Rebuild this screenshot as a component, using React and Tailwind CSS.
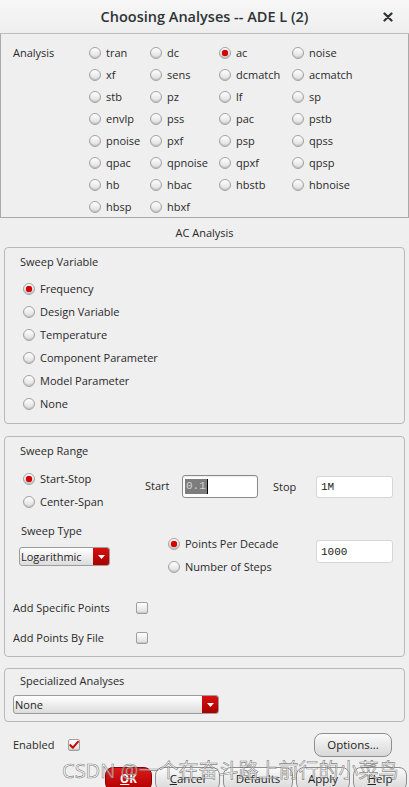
import React from "react";

const Radio = ({ checked }) => (
  <span className="relative inline-flex h-[12px] w-[12px] shrink-0 items-center justify-center rounded-full border border-[#a3a3a3] bg-[linear-gradient(#ffffff,#dcdcdc)] shadow-[inset_0_-1px_1px_rgba(0,0,0,0.15)]">
    {checked && <span className="h-[6px] w-[6px] rounded-full bg-[#d40000] shadow-[0_0_1px_#900]" />}
  </span>
);

const RadioItem = ({ label, checked, className = "" }) => (
  <div className={"flex items-center gap-[5px] " + className}>
    <Radio checked={checked} />
    <span className="whitespace-nowrap">{label}</span>
  </div>
);

const Checkbox = ({ checked }) => (
  <span className="inline-flex h-[12px] w-[12px] shrink-0 items-center justify-center rounded-[2px] border border-[#a0a0a0] bg-[linear-gradient(#ffffff,#dedede)] shadow-[inset_0_-1px_1px_rgba(0,0,0,0.12)]">
    {checked && (
      <svg width="11" height="10" viewBox="0 0 11 10">
        <path d="M1.5 5.2 L4.3 8 L9.8 1.5" fill="none" stroke="#cc0000" strokeWidth="2.2" strokeLinecap="round" strokeLinejoin="round" />
      </svg>
    )}
  </span>
);

const Dropdown = ({ value, className = "" }) => (
  <div className={"flex overflow-hidden rounded-[3px] border border-[#9c9c9c] bg-[linear-gradient(#ffffff,#dcdcdc)] " + className}>
    <span className="flex flex-1 items-center pl-[1px] text-[#1e1e1e]">{value}</span>
    <span className="flex w-[16px] items-center justify-center bg-[linear-gradient(#d81010,#a80000)]">
      <svg width="7" height="4" viewBox="0 0 7 4">
        <path d="M0 0 H7 L3.5 4 Z" fill="#ffffff" />
      </svg>
    </span>
  </div>
);

const Group = ({ children, className = "" }) => (
  <div className={"mx-[4px] rounded-[4px] border border-[#b9b9b9] " + className}>{children}</div>
);

const analyses = [
  ["tran", "dc", "ac", "noise"],
  ["xf", "sens", "dcmatch", "acmatch"],
  ["stb", "pz", "lf", "sp"],
  ["envlp", "pss", "pac", "pstb"],
  ["pnoise", "pxf", "psp", "qpss"],
  ["qpac", "qpnoise", "qpxf", "qpsp"],
  ["hb", "hbac", "hbstb", "hbnoise"],
  ["hbsp", "hbxf"],
];

const Btn = ({ children, className = "" }) => (
  <div className={"flex h-[24px] items-center justify-center rounded-[8px] border border-[#8f8f8f] bg-[linear-gradient(#fafafa,#d8d8d8)] text-[#222] " + className}>
    {children}
  </div>
);

export default function App() {
  return (
    <div className="relative h-[787px] w-[409px] overflow-hidden bg-[#efefef] font-['Open_Sans','Noto_Sans',sans-serif] text-[11px] leading-[16px] text-[#2a2a2a]">
      {/* Title bar */}
      <div className="grid h-[34px] grid-cols-[40px_1fr_40px] items-center border-b border-[#bdbdbd] bg-[linear-gradient(#f7f7f7,#eeeeee)]">
        <span />
        <span className="text-center text-[14.5px] font-semibold text-[#2e3436]">Choosing Analyses -- ADE L (2)</span>
        <span className="flex justify-center pr-[2px]">
          <svg width="10" height="10" viewBox="0 0 10 10">
            <path d="M1.5 1.5 L8.5 8.5 M8.5 1.5 L1.5 8.5" stroke="#2e3436" strokeWidth="2.2" strokeLinecap="round" />
          </svg>
        </span>
      </div>

      {/* Analysis */}
      <div className="flex h-[184px] border-x border-b border-[#a9a9a9] pt-[8px]">
        <div className="w-[88px] pl-[12px] leading-[22px]">Analysis</div>
        <div className="grid grid-cols-[61px_69px_73px_auto] auto-rows-[22px]">
          {analyses.flatMap((row, r) =>
            [0, 1, 2, 3].map((c) =>
              row[c] ? (
                <RadioItem key={r + "-" + c} label={row[c]} checked={row[c] === "ac"} />
              ) : (
                <span key={r + "-" + c} />
              )
            )
          )}
        </div>
      </div>

      {/* AC Analysis header */}
      <div className="flex h-[29px] items-center justify-center">AC Analysis</div>

      {/* Sweep Variable */}
      <Group className="h-[177px] pl-[15px] pt-[6px]">
        <div>Sweep Variable</div>
        <div className="ml-[3px] mt-[7px] flex flex-col">
          {["Frequency", "Design Variable", "Temperature", "Component Parameter", "Model Parameter", "None"].map((l, i) => (
            <RadioItem key={l} label={l} checked={i === 0} className="h-[23px]" />
          ))}
        </div>
      </Group>

      {/* Sweep Range */}
      <Group className="mt-[12px] h-[221px] pt-[6px]">
        <div className="pl-[15px]">Sweep Range</div>
        <div className="mt-[8px] flex items-start">
          <div className="ml-[18px] flex w-[122px] flex-col">
            <RadioItem label="Start-Stop" checked className="h-[23px]" />
            <RadioItem label="Center-Span" className="h-[23px]" />
          </div>
          <div className="mt-[7px] flex items-center">
            <span className="w-[37px]">Start</span>
            <div className="flex h-[23px] w-[76px] items-center rounded-[3px] border border-[#8a8a8a] bg-white pl-[2px] font-['Liberation_Mono',monospace] text-[11px] shadow-[inset_0_1px_1px_rgba(0,0,0,0.08)]">
              <span className="bg-[#7d7d7d] px-[1px] leading-[15px] text-[#d4d4d4]">0.1</span>
              <span className="h-[15px] w-[1px] bg-black" />
            </div>
            <span className="ml-[15px] mt-[2px] w-[43px]">Stop</span>
            <div className="mt-[2px] flex h-[22px] w-[77px] items-center rounded-[3px] border border-[#d6d6d6] bg-white pl-[4px] font-['Liberation_Mono',monospace] text-[11px] text-[#222]">
              1M
            </div>
          </div>
        </div>
        <div className="mt-[10px] flex items-start">
          <div className="w-[163px] pl-[14px]">
            <div className="pl-[2px]">Sweep Type</div>
            <Dropdown value="Logarithmic" className="mt-[8px] h-[19px] w-[91px]" />
          </div>
          <div className="mt-[9px] flex w-[148px] flex-col">
            <RadioItem label="Points Per Decade" checked className="h-[23px]" />
            <RadioItem label="Number of Steps" className="h-[23px]" />
          </div>
          <div className="mt-[17px] flex h-[23px] w-[77px] items-center rounded-[3px] border border-[#d6d6d6] bg-white pl-[4px] font-['Liberation_Mono',monospace] text-[11px] text-[#222]">
            1000
          </div>
        </div>
        <div className="mt-[15px] flex h-[30px] items-center pl-[8px]">
          <span className="w-[123px]">Add Specific Points</span>
          <Checkbox />
        </div>
        <div className="flex h-[30px] items-center pl-[8px]">
          <span className="w-[123px]">Add Points By File</span>
          <Checkbox />
        </div>
      </Group>

      {/* Specialized Analyses */}
      <Group className="mt-[11px] h-[54px] pt-[4px]">
        <div className="pl-[15px]">Specialized Analyses</div>
        <Dropdown value="None" className="ml-[8px] mt-[6px] h-[19px] w-[206px]" />
      </Group>

      {/* Enabled / Options */}
      <div className="mt-[12px] flex h-[22px] items-center pl-[13px] pr-[17px]">
        <span className="w-[55px]">Enabled</span>
        <Checkbox checked />
        <span className="flex-1" />
        <Btn className="w-[78px] text-[11.5px]">Options...</Btn>
      </div>

      {/* Bottom buttons */}
      <div className="mt-[11px] flex gap-[3px] pl-[105px] text-[11.5px]">
        <div className="flex h-[24px] w-[47px] items-center justify-center rounded-[8px] border border-[#8a0000] bg-[linear-gradient(#e01818,#b00000)] font-bold text-white">
          <span><u>O</u>K</span>
        </div>
        <Btn className="w-[65px]"><span><u>C</u>ancel</span></Btn>
        <Btn className="w-[70px]">Defaults</Btn>
        <Btn className="w-[54px]">Apply</Btn>
        <Btn className="w-[54px]"><span><u>H</u>elp</span></Btn>
      </div>

      {/* Watermark */}
      <div className="pointer-events-none absolute left-[62px] top-[757px] whitespace-nowrap font-['Noto_Sans','Noto_Sans_CJK_SC',sans-serif] text-[20px] leading-[28px] text-[rgba(255,255,255,0.55)] [-webkit-text-stroke:0.6px_rgba(90,90,90,0.75)]">
        CSDN @一个在奋斗路上前行的小菜鸟
      </div>
    </div>
  );
}
